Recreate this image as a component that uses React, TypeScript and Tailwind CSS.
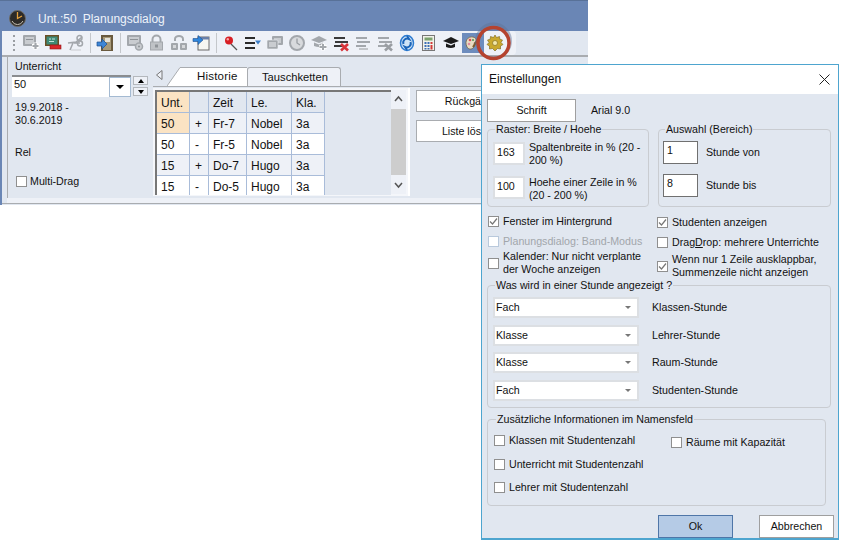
import type { ReactNode } from "react";

const rows = [
  { unt: "50", sign: "+", zeit: "Fr-7", le: "Nobel", kla: "3a" },
  { unt: "50", sign: "-", zeit: "Fr-5", le: "Nobel", kla: "3a" },
  { unt: "15", sign: "+", zeit: "Do-7", le: "Hugo", kla: "3a" },
  { unt: "15", sign: "-", zeit: "Do-5", le: "Hugo", kla: "3a" },
];

const Svg = ({ children }: { children: ReactNode }) => (
  <svg width="16" height="16" viewBox="0 0 16 16" className="block overflow-visible">
    {children}
  </svg>
);

const Monitor = ({ x = 0, y = 1, w = 12, h = 9 }: { x?: number; y?: number; w?: number; h?: number }) => (
  <g>
    <rect x={x} y={y} width={w} height={h} rx="1" fill="#a3a7ac" />
    <rect x={x + 2} y={y + 2} width={w - 4} height={h - 4} fill="#c9ccd0" />
    <rect x={x + 3} y={y + 4} width={w - 6} height="1" fill="#8f9398" />
  </g>
);

const GrayLines = ({ color = "#a3a7ac" }: { color?: string }) => (
  <g fill={color}>
    <rect x="1" y="2" width="11" height="2" />
    <rect x="2" y="6" width="13" height="2" />
    <rect x="1" y="10" width="10" height="2" />
  </g>
);

const Cap = ({ fill = "#a3a7ac" }: { fill?: string }) => (
  <g fill={fill}>
    <path d="M0 5 L8 1 L16 5 L8 8 Z" />
    <path d="M3 7.500 L8 9.500 L12 7.500 V11 Q8 13 3 11 Z" />
  </g>
);

const toolbar: (ReactNode | "sep")[] = [
  <Svg key="add">
    <Monitor y={0} w={13} h={11} />
    <path d="M9 11 h7 M12.500 7.500 v7" stroke="#fff" strokeWidth="4" />
    <path d="M9.500 11 h6 M12.500 8 v6" stroke="#a3a7ac" strokeWidth="2.200" />
  </Svg>,
  <Svg key="remove">
    <rect x="0" y="0" width="14" height="11" fill="#6b4f24" />
    <rect x="1.500" y="1.500" width="11" height="8" fill="#3f8a76" />
    <path d="M4 4 h2 M7 4 h3 M4 6.500 h5" stroke="#c5e3da" />
    <rect x="5" y="10" width="11" height="4" fill="#d8262a" stroke="#8f1518" strokeWidth="0.600" />
  </Svg>,
  <Svg key="cut">
    <path d="M1 8 L9 7 L15 2 M3 15 L6 8 M7 8 L13 8" stroke="#a3a7ac" strokeWidth="1.500" fill="none" />
    <circle cx="12.500" cy="3" r="2.500" fill="none" stroke="#a3a7ac" strokeWidth="1.500" />
    <circle cx="13" cy="8.500" r="2.500" fill="none" stroke="#a3a7ac" strokeWidth="1.500" />
    <path d="M4 15 h10" stroke="#c9ccd0" />
  </Svg>,
  "sep",
  <Svg key="door">
    <rect x="4" y="0" width="12" height="16" fill="#6a5a3e" />
    <rect x="6" y="2" width="8" height="13" fill="#a89a7a" />
    <rect x="8" y="3" width="5" height="4" fill="#e4e2d8" />
    <path d="M0 7 H5 V4 L10 9 L5 14 V11 H0 Z" fill="#3d86d6" stroke="#1d4f8f" strokeWidth="0.700" />
  </Svg>,
  "sep",
  <Svg key="mon-gear">
    <Monitor y={0} w={14} h={11} />
    <circle cx="12" cy="11.500" r="3.500" fill="#c9ccd0" stroke="#a3a7ac" strokeWidth="1.500" />
    <circle cx="12" cy="11.500" r="1" fill="#8f9398" />
  </Svg>,
  <Svg key="lock">
    <path d="M3.500 8 V4.500 a4 4 0 0 1 8 0 V8" fill="none" stroke="#a3a7ac" strokeWidth="2" />
    <rect x="1.500" y="7" width="12" height="8" fill="#bfc2c6" stroke="#a3a7ac" />
    <rect x="6" y="9.500" width="3" height="3" fill="#8f9398" />
  </Svg>,
  <Svg key="link">
    <path d="M4 6 V4 a4 3 0 0 1 8 0 V6" fill="none" stroke="#a3a7ac" strokeWidth="2" />
    <rect x="0" y="8" width="7" height="7" rx="1" fill="#a3a7ac" />
    <rect x="9" y="8" width="7" height="7" rx="1" fill="#a3a7ac" />
    <rect x="2" y="10" width="3" height="3" fill="#d6d8db" />
    <rect x="11" y="10" width="3" height="3" fill="#d6d8db" />
  </Svg>,
  <Svg key="arrow-window">
    <rect x="5" y="2" width="11" height="13" fill="#f7f7f2" stroke="#6a6a6a" />
    <rect x="5" y="2" width="11" height="2.500" fill="#6a7fa8" />
    <path d="M0 3.500 H5 V0.500 L10 5 L5 9.500 V6.500 H0 Z" fill="#2f86dc" stroke="#1d4f8f" strokeWidth="0.600" />
  </Svg>,
  "sep",
  <Svg key="pin">
    <path d="M8 9 L14 15" stroke="#555" strokeWidth="1.300" />
    <circle cx="6" cy="5.500" r="4" fill="#d81e24" />
    <circle cx="4.800" cy="4.200" r="1.200" fill="#f6a5a5" />
  </Svg>,
  <Svg key="list">
    <path d="M0 3 h10 M0 8 h10 M0 13 h10" stroke="#2b2b2b" strokeWidth="2" />
    <path d="M10 5.500 h6 l-3 4 Z" fill="#3d7fc8" />
  </Svg>,
  <Svg key="monitors">
    <rect x="5" y="1" width="11" height="9" rx="1" fill="#a3a7ac" />
    <rect x="7" y="3" width="7" height="5" fill="#c9ccd0" />
    <rect x="0" y="5" width="11" height="9" rx="1" fill="#a3a7ac" stroke="#eef1f7" strokeWidth="0.600" />
    <rect x="2" y="7" width="7" height="5" fill="#c9ccd0" />
  </Svg>,
  <Svg key="clock">
    <circle cx="8" cy="8" r="7" fill="#d8dadd" stroke="#a3a7ac" strokeWidth="2" />
    <path d="M8 3.500 V8 L11 10" stroke="#9a9ea3" strokeWidth="1.300" fill="none" />
  </Svg>,
  <Svg key="cap-add">
    <Cap />
    <path d="M8 12 h8 M12 8.500 v7" stroke="#fff" strokeWidth="3.500" />
    <path d="M8.500 12 h7 M12 9 v6" stroke="#a3a7ac" strokeWidth="2" />
  </Svg>,
  <Svg key="lines-x">
    <GrayLines color="#3a3a3a" />
    <path d="M8 9 L15 15.500 M15 9 L8 15.500" stroke="#d9343a" strokeWidth="2.600" />
  </Svg>,
  <Svg key="lines">
    <GrayLines />
    <rect x="4" y="13" width="9" height="2" fill="#c2c5c9" />
  </Svg>,
  <Svg key="lines-gray-x">
    <GrayLines />
    <path d="M8 9 L15 15.500 M15 9 L8 15.500" stroke="#9a9ea3" strokeWidth="2.600" />
  </Svg>,
  <Svg key="refresh">
    <ellipse cx="8" cy="8" rx="6.500" ry="7.500" fill="#cfe4f7" stroke="#2d7bd0" strokeWidth="1.500" />
    <path d="M4.500 9 A4 4 0 0 1 10 4 L8 1 M11.500 7 A4 4 0 0 1 6 12 L8 15" fill="none" stroke="#1b64b8" strokeWidth="2" />
  </Svg>,
  <Svg key="calc">
    <rect x="1.500" y="0.500" width="12" height="15" fill="#f2f2ea" stroke="#777" />
    <rect x="3.500" y="2.500" width="8" height="3" fill="#7da36f" />
    <g fill="#3d6fb5">
      <rect x="3.500" y="7" width="2" height="2" />
      <rect x="6.500" y="7" width="2" height="2" />
      <rect x="3.500" y="10" width="2" height="2" />
      <rect x="6.500" y="10" width="2" height="2" />
      <rect x="3.500" y="13" width="2" height="1.500" />
      <rect x="6.500" y="13" width="2" height="1.500" />
    </g>
    <rect x="9.500" y="7" width="2" height="2" fill="#d23a3a" />
    <rect x="9.500" y="10" width="2" height="4.500" fill="#d23a3a" />
  </Svg>,
  <Svg key="cap">
    <g transform="translate(0 1)">
      <Cap fill="#1b1b1b" />
    </g>
  </Svg>,
  <Svg key="palette">
    <path d="M2 12 C-1 6 3 1 8 2 C12 3 12 6 10 7 C8 8 11 11 8 13 C6 15 3 14 2 12 Z" fill="#e9dcc2" stroke="#6d5f48" strokeWidth="0.800" />
    <circle cx="5" cy="5" r="1.300" fill="#d94a5a" />
    <circle cx="4" cy="9" r="1.300" fill="#e08aa0" />
    <circle cx="8" cy="5" r="1.100" fill="#5a9a58" />
    <path d="M16 0 L8 12" stroke="#7d5a2a" strokeWidth="2" />
  </Svg>,
  <Svg key="gear">
    <path d="M8 0 L9.500 2.500 L12.500 1.500 L12.800 4.200 L15.500 5 L14 7.500 L16 9.500 L13.500 11 L13.500 14 L10.500 13.500 L8 16 L5.500 13.500 L2.500 14 L2.500 11 L0 9.500 L2 7.500 L0.500 5 L3.200 4.200 L3.500 1.500 L6.500 2.500 Z" fill="#c9a92e" stroke="#77621a" strokeWidth="0.600" />
    <circle cx="8" cy="8" r="2.500" fill="#f2e8a8" stroke="#77621a" strokeWidth="0.600" />
  </Svg>,
];

const Check = ({ checked = false, faded = false, className = "" }: { checked?: boolean; faded?: boolean; className?: string }) => (
  <span
    className={`flex h-[11px] w-[11px] shrink-0 items-center justify-center border bg-white ${
      faded ? "border-[#b9c9dc]" : "border-[#8f8f8f]"
    } ${className}`}
  >
    {checked && (
      <svg width="9" height="9" viewBox="0 0 9 9">
        <path d="M1 4.500 L3.500 7 L8 1.500" fill="none" stroke="#777" strokeWidth="1.200" />
      </svg>
    )}
  </span>
);

const Group = ({ title, className, children }: { title: string; className: string; children: ReactNode }) => (
  <fieldset className={`rounded-[4px] border border-[#c9ccd1] ${className}`}>
    <legend className="ml-[2px] px-[1px] text-[10.67px] leading-[13px]">{title}</legend>
    {children}
  </fieldset>
);

const Field = ({ value, dark = false, className }: { value: string; dark?: boolean; className: string }) => (
  <div
    className={`flex shrink-0 items-start bg-white pt-[2px] ${
      dark ? "border border-[#707070] pl-[3px]" : "border-2 border-[#dcdfe3] pl-[2px]"
    } ${className}`}
  >
    {value}
  </div>
);

const Select = ({ value, label }: { value: string; label: string }) => (
  <div className="flex h-[21px] items-center">
    <div className="flex h-[21px] w-[146px] items-center justify-between border-2 border-[#dcdfe3] bg-white pl-[1px] pr-[6px]">
      {value}
      <svg width="6" height="3" viewBox="0 0 6 3">
        <path d="M0 0 H6 L3 3 Z" fill="#777" />
      </svg>
    </div>
    <span className="ml-[13px]">{label}</span>
  </div>
);

const DialogCheck = ({ label, checked, className = "" }: { label: ReactNode; checked?: boolean; className?: string }) => (
  <div className={`flex items-center gap-[4px] leading-[13px] ${className}`}>
    <Check checked={checked} />
    <span>{label}</span>
  </div>
);

const Dialog = () => (
  <div className="absolute left-[481px] top-[64px] h-[476px] w-[358px] border border-b-2 border-[#4ea5cf] bg-[#e1e7f0] text-[10.67px] leading-[13px] text-[#111]">
    <div className="flex h-[29px] items-center justify-between bg-white pl-[7px] pr-[8px]">
      <span className="text-[12px]">Einstellungen</span>
      <svg width="11" height="11" viewBox="0 0 11 11">
        <path d="M0.500 0.500 L10.500 10.500 M10.500 0.500 L0.500 10.500" stroke="#222" strokeWidth="1" />
      </svg>
    </div>

    <div className="pl-[5px] pt-[5px]">
      <div className="flex items-center">
        <button className="h-[23px] w-[89px] border border-[#9f9f9f] bg-white">Schrift</button>
        <span className="ml-[15px]">Arial 9.0</span>
      </div>

      <div className="mt-[1px] flex gap-[9px]">
        <Group title="Raster: Breite / Hoehe" className="h-[84px] w-[162px] pl-[5px]">
          <div className="mt-[6px] flex gap-[4px]">
            <Field value="163" className="h-[23px] w-[32px]" />
            <span className="-mt-[1px] w-[118px]">Spaltenbreite in % (20 - 200 %)</span>
          </div>
          <div className="mt-[9px] flex gap-[4px]">
            <Field value="100" className="h-[23px] w-[32px]" />
            <span className="w-[118px]">Hoehe einer Zeile in % (20 - 200 %)</span>
          </div>
        </Group>
        <Group title="Auswahl (Bereich)" className="h-[84px] w-[173px] pl-[4px]">
          <div className="mt-[5px] flex items-center gap-[8px]">
            <Field value="1" dark className="h-[23px] w-[35px]" />
            <span>Stunde von</span>
          </div>
          <div className="mt-[10px] flex items-center gap-[8px]">
            <Field value="8" dark className="h-[23px] w-[35px]" />
            <span>Stunde bis</span>
          </div>
        </Group>
      </div>

      <div className="mt-[8px] flex">
        <div className="w-[170px] pl-[1px]">
          <DialogCheck checked label="Fenster im Hintergrund" className="h-[13px]" />
          <div className="mt-[7px] flex h-[13px] items-center gap-[4px] text-[#a2a6ab]">
            <Check faded />
            <span>Planungsdialog: Band-Modus</span>
          </div>
          <DialogCheck label={<>Kalender: Nur nicht verplante<br />der Woche anzeigen</>} className="mt-[2px]" />
        </div>
        <div className="pt-[1px]">
          <DialogCheck checked label="Studenten anzeigen" className="h-[13px]" />
          <DialogCheck
            label={<>Drag<span className="underline">D</span>rop: mehrere Unterrichte</>}
            className="mt-[7px] h-[13px]"
          />
          <DialogCheck
            checked
            label={<>Wenn nur 1 Zeile ausklappbar,<br />Summenzeile nicht anzeigen</>}
            className="mt-[4px]"
          />
        </div>
      </div>

      <Group title="Was wird in einer Stunde angezeigt ?" className="h-[129px] w-[344px] pl-[5px]">
        <div className="mt-[5px] flex flex-col gap-[6.500px]">
          <Select value="Fach" label="Klassen-Stunde" />
          <Select value="Klasse" label="Lehrer-Stunde" />
          <Select value="Klasse" label="Raum-Stunde" />
          <Select value="Fach" label="Studenten-Stunde" />
        </div>
      </Group>

      <Group title="Zusätzliche Informationen im Namensfeld" className="mt-[5px] h-[93px] w-[339px] pl-[6px]">
        <div className="mt-[8px] flex">
          <div className="flex w-[177px] flex-col gap-[10.500px]">
            <DialogCheck label="Klassen mit Studentenzahl" />
            <DialogCheck label="Unterricht mit Studentenzahl" />
            <DialogCheck label="Lehrer mit Studentenzahl" />
          </div>
          <DialogCheck label="Räume mit Kapazität" className="mt-[2px] h-[13px]" />
        </div>
      </Group>

      <div className="mt-[9px] flex justify-end gap-[26px] pr-[4px]">
        <button className="h-[23px] w-[75px] border border-[#4f76a8] bg-[#b5cbe6]">Ok</button>
        <button className="h-[23px] w-[75px] border border-[#9f9f9f] bg-white">Abbrechen</button>
      </div>
    </div>
  </div>
);

const LeftPanel = () => (
  <div className="w-[146px] shrink-0 border-l border-[#a9acb0] pl-[4px] pt-[3px] text-[10.67px] leading-[13px]">
    <div className="pl-[3px]">Unterricht</div>
    <div className="mt-[2px] flex gap-[2px]">
      <div className="flex h-[22px] w-[119px] justify-between border-t-2 border-[#8a8d90] bg-white pl-[2px] text-[11px]">
        <span className="pt-[1px]">50</span>
        <span className="flex h-[20px] w-[22px] items-center justify-center border border-[#a4bad2] bg-white">
          <svg width="8" height="4" viewBox="0 0 8 4">
            <path d="M0 0 H8 L4 4 Z" fill="#000" />
          </svg>
        </span>
      </div>
      <div className="flex flex-col gap-[2px] pt-[1px]">
        {["M0 4 L3 0 L6 4 Z", "M0 0 H6 L3 4 Z"].map((d) => (
          <span key={d} className="flex h-[9px] w-[15px] items-center justify-center border border-[#b4b8bd] bg-[#eef1f7]">
            <svg width="6" height="4" viewBox="0 0 6 4">
              <path d={d} fill="#000" />
            </svg>
          </span>
        ))}
      </div>
    </div>
    <div className="mt-[4px] pl-[3px]">
      19.9.2018 -
      <br />
      30.6.2019
    </div>
    <div className="mt-[19px] pl-[3px]">Rel</div>
    <div className="mt-[16px] flex items-center gap-[3px] pl-[4px]">
      <Check />
      <span>Multi-Drag</span>
    </div>
  </div>
);

const Cell = ({ children, className = "" }: { children?: ReactNode; className?: string }) => (
  <div className={`flex h-[21px] items-center border-b border-r border-[#a9bcd9] pl-1 pt-[2px] ${className}`}>{children}</div>
);

const RightPanel = () => (
  <div className="w-[435px]">
    <div className="flex h-[30px] items-end border-b border-[#a9acb0] pl-[3px]">
      <svg width="7" height="10" viewBox="0 0 7 10" className="mb-[6px] mr-[4px]">
        <path d="M6 0.500 V9.500 L0.500 5 Z" fill="#eef1f7" stroke="#777" />
      </svg>
      <div className="flex h-[19px] items-stretch">
        <svg width="16" height="19" viewBox="0 0 16 19" className="block">
          <path d="M0 19 L13 0.500 H16 V19 Z" fill="#fff" />
          <path d="M0 19 L13 0.500 H16" fill="none" stroke="#a9acb0" />
        </svg>
        <div className="flex w-[64px] items-center border-t border-[#a9acb0] bg-white pl-[14px] text-[11.500px] tracking-[0.2px]">
          Historie
        </div>
      </div>
      <div className="flex h-[19px] w-[94px] items-center self-end rounded-t-[3px] border border-b-0 border-[#a9acb0] bg-[#eef1f7] pl-[14px] text-[11.200px]">
        Tauschketten
      </div>
    </div>

    <div className="flex items-start pt-[1px]">
      <div className="flex h-[108px] w-[257px] border-r-2 border-white bg-[#f4f6fa] pl-[2px] pt-[2px]">
        <div className="flex h-[105px] w-[236px] border-l-2 border-t-2 border-l-[#777] border-t-[#777] bg-[#e1e7f0]">
          <div className="grid h-[103px] grid-cols-[33px_19px_38px_45px_33px] content-start overflow-hidden text-[12px] leading-[14px]">
            <Cell className="bg-[#fbe3c3]">Unt.</Cell>
            <Cell />
            <Cell>Zeit</Cell>
            <Cell>Le.</Cell>
            <Cell>Kla.</Cell>
            {rows.map((row, i) => {
              const bg = i % 2 === 0 ? "bg-[#eef1f7]" : "bg-white";
              return [
                <Cell key={`${i}u`} className={i === 0 ? "bg-[#fbe3c3]" : bg}>{row.unt}</Cell>,
                <Cell key={`${i}s`} className={`${bg} pl-[5px]`}>{row.sign}</Cell>,
                <Cell key={`${i}z`} className={bg}>{row.zeit}</Cell>,
                <Cell key={`${i}l`} className={bg}>{row.le}</Cell>,
                <Cell key={`${i}k`} className={bg}>{row.kla}</Cell>,
              ];
            })}
          </div>
        </div>
        <div className="flex h-[104px] w-[15px] flex-col items-center justify-between bg-[#eef1f7]">
          <svg width="9" height="18" viewBox="0 0 9 18">
            <path d="M1 11 L4.500 7 L8 11" fill="none" stroke="#555" strokeWidth="1.500" />
          </svg>
          <div className="h-[66px] w-[15px] bg-[#cdcdcd]" />
          <svg width="9" height="18" viewBox="0 0 9 18">
            <path d="M1 7 L4.500 11 L8 7" fill="none" stroke="#555" strokeWidth="1.500" />
          </svg>
        </div>
      </div>
      <div className="ml-[6px] flex w-[114px] flex-col gap-[8px] pt-[2px] text-[10.67px]">
        <button className="h-[22px] border border-[#a9acb0] bg-white">Rückgängig</button>
        <button className="h-[22px] border border-[#a9acb0] bg-white">Liste löschen</button>
      </div>
    </div>
  </div>
);

export default function App() {
  return (
    <div className="relative h-[541px] w-[842px] overflow-hidden bg-white font-['Liberation_Sans',sans-serif] text-[#111]">
      <div className="h-[205px] w-[588px] border-l-2 border-[#6a86b5] bg-[#e1e7f0]">
        <div className="-ml-[2px] flex h-[31px] items-center border-t border-[#587198] bg-[#6a86b5] pl-[9px] pt-[5px] text-[12px] text-[#eef3fa]">
          <svg width="17" height="17" viewBox="0 0 17 17">
            <circle cx="8.500" cy="8.500" r="8" fill="#2c2a28" stroke="#6d6a66" />
            <path d="M8.500 2 V8.500 L13 6" fill="none" stroke="#e8a33c" strokeWidth="1.300" />
            <path d="M3 11 A6 6 0 0 0 14 11" fill="none" stroke="#c9c2b4" />
          </svg>
          <span className="ml-[12px]">Unt.:50</span>
          <span className="ml-[6px]">Planungsdialog</span>
        </div>

        <div className="h-[26px] border-b-2 border-[#a9acb0] bg-[#e1e7f0]">
          <div className="flex h-[24px] w-[514px] items-center rounded-r-[4px] bg-[#eef1f7] pl-[11px]">
            <div className="mr-[3px] flex h-[16px] w-[2px] flex-col justify-between">
              <i className="block h-[2px] bg-[#9a9ea3]" />
              <i className="block h-[2px] bg-[#9a9ea3]" />
              <i className="block h-[2px] bg-[#9a9ea3]" />
              <i className="block h-[2px] bg-[#9a9ea3]" />
            </div>
            <div className="w-[2px]" />
            {toolbar.map((item, i) =>
              item === "sep" ? (
                <div key={i} className="flex w-[8px] justify-center">
                  <i className="block h-[20px] w-[1px] bg-[#c4c7cb]" />
                </div>
              ) : (
                <div
                  key={i}
                  className={`flex h-[20px] w-[22px] items-center justify-center ${i === 22 ? "bg-[#6d8cbd]" : ""}`}
                >
                  {item}
                </div>
              ),
            )}
          </div>
        </div>

        <div className="ml-[5px] flex h-[146px] border-b-[5px] border-[#eef1f7]">
          <LeftPanel />
          <RightPanel />
        </div>
        <div className="h-[1px] bg-[#a9acb0]" />
      </div>

      {/* red marker round the settings button */}
      <svg width="44" height="44" viewBox="0 0 44 44" className="absolute left-[472px] top-[21px]">
        <circle cx="21.500" cy="20" r="17" fill="none" stroke="#5f7397" strokeOpacity="0.450" strokeWidth="3" />
        <circle cx="21.500" cy="22" r="15.500" fill="none" stroke="#b5432f" strokeWidth="3.500" />
      </svg>

      <Dialog />
    </div>
  );
}
